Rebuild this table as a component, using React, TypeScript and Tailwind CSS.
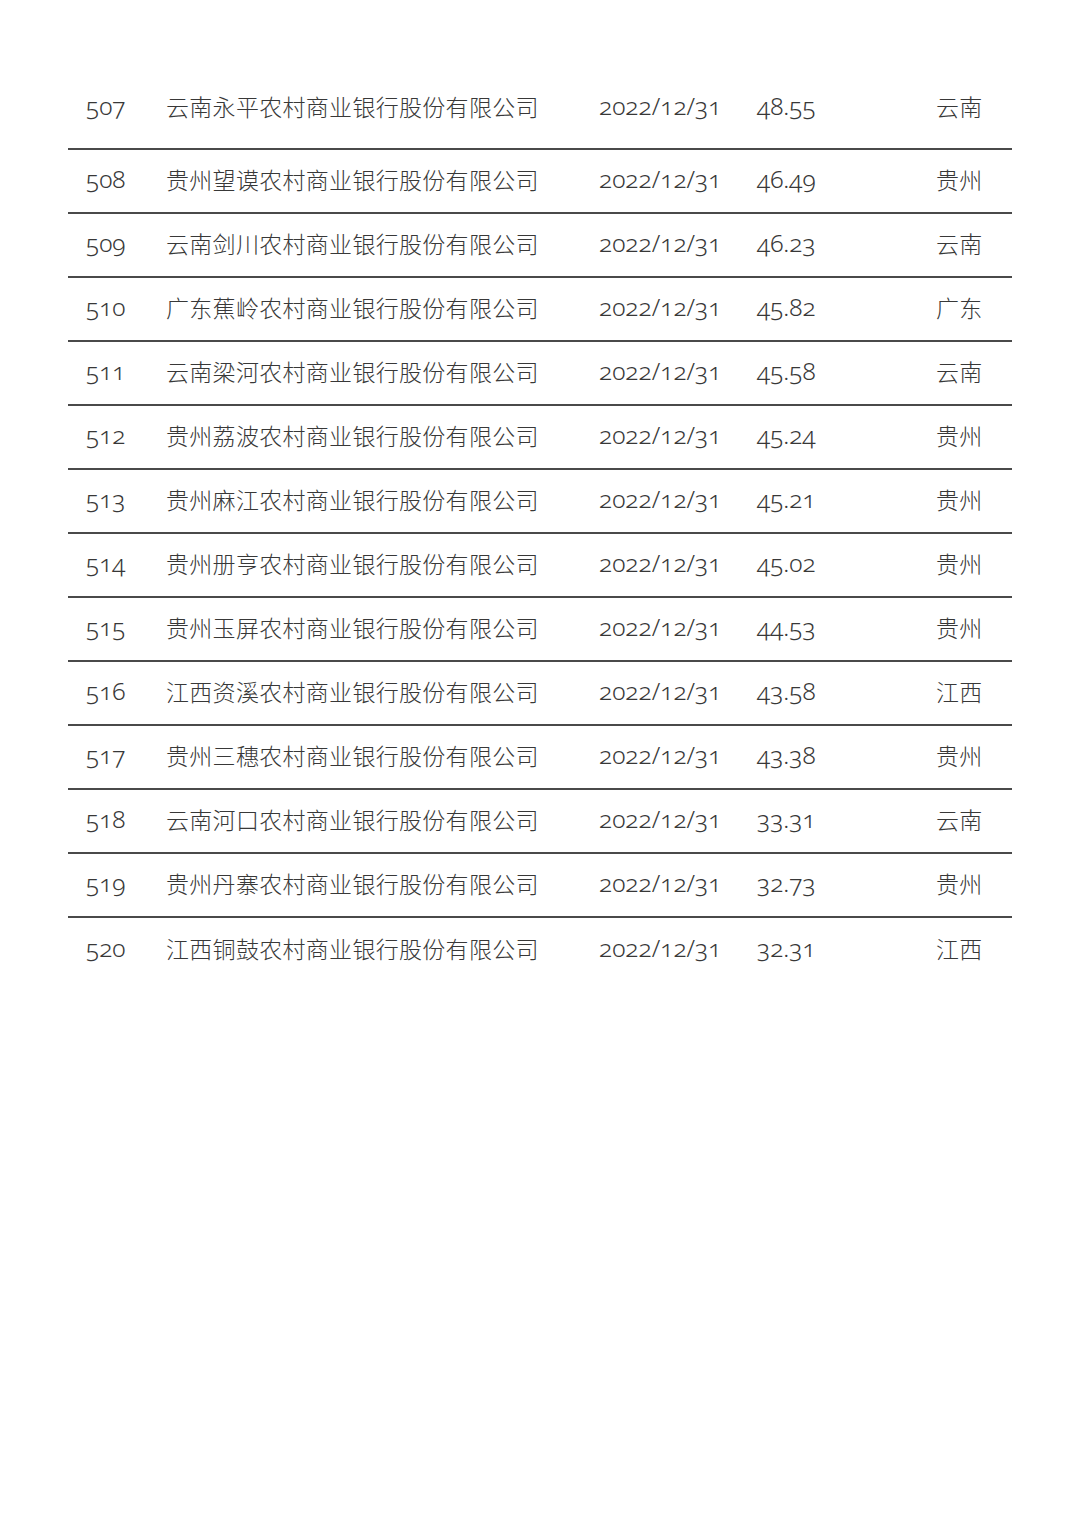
const rows = [
  ["507", "云南永平农村商业银行股份有限公司", "48.55", "云南"],
  ["508", "贵州望谟农村商业银行股份有限公司", "46.49", "贵州"],
  ["509", "云南剑川农村商业银行股份有限公司", "46.23", "云南"],
  ["510", "广东蕉岭农村商业银行股份有限公司", "45.82", "广东"],
  ["511", "云南梁河农村商业银行股份有限公司", "45.58", "云南"],
  ["512", "贵州荔波农村商业银行股份有限公司", "45.24", "贵州"],
  ["513", "贵州麻江农村商业银行股份有限公司", "45.21", "贵州"],
  ["514", "贵州册亨农村商业银行股份有限公司", "45.02", "贵州"],
  ["515", "贵州玉屏农村商业银行股份有限公司", "44.53", "贵州"],
  ["516", "江西资溪农村商业银行股份有限公司", "43.58", "江西"],
  ["517", "贵州三穗农村商业银行股份有限公司", "43.38", "贵州"],
  ["518", "云南河口农村商业银行股份有限公司", "33.31", "云南"],
  ["519", "贵州丹寨农村商业银行股份有限公司", "32.73", "贵州"],
  ["520", "江西铜鼓农村商业银行股份有限公司", "32.31", "江西"],
]

export default function App() {
  return (
    <div className="w-[1080px] h-[1528px] bg-white pt-[67px] text-[#383838] font-['Noto_Sans','Noto_Sans_CJK_SC',sans-serif]">
      <div className="ml-[68px] w-[944px]">
        {rows.map(([no, name, value, region], i) => (
          <div
            key={no}
            className={`flex items-center pb-[3px] ${i === 0 ? "h-[83px]" : "h-16"} ${
              i < rows.length - 1 ? "border-b-2 border-[#4a4a4a]" : ""
            }`}
          >
            <div className="w-[98px] pl-[18px] text-[24.5px] font-[350] oldstyle-nums">{no}</div>
            <div className="w-[433px] text-[23px] tracking-[0.3px] font-light font-['Noto_Sans_CJK_SC',sans-serif]">
              {name}
            </div>
            <div className="w-[158px] text-[24.5px] font-[350] oldstyle-nums">2022/12/31</div>
            <div className="w-[179px] text-[24.5px] font-[350] oldstyle-nums">{value}</div>
            <div className="text-[23px] tracking-[0.3px] font-light font-['Noto_Sans_CJK_SC',sans-serif]">{region}</div>
          </div>
        ))}
      </div>
    </div>
  )
}
